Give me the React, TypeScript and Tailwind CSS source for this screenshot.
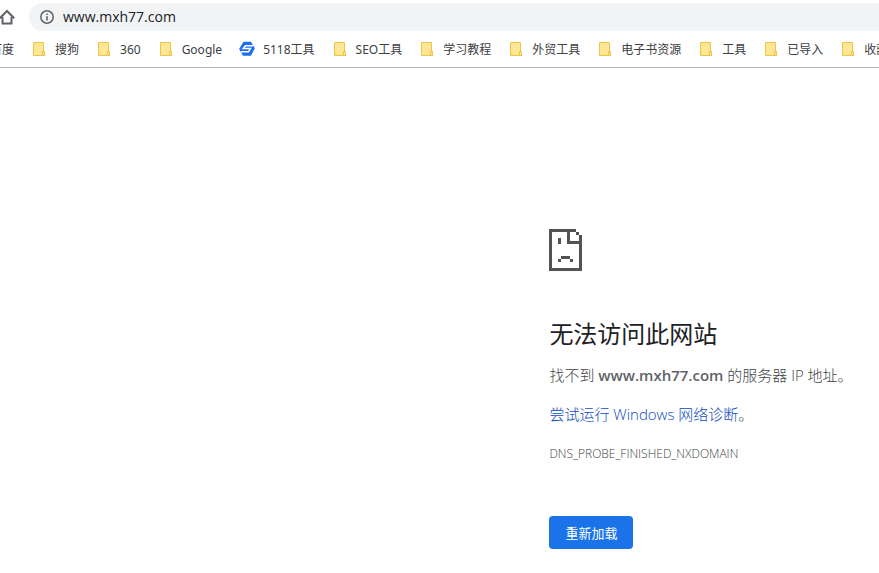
type Bookmark = { label: string; icon: "folder" | "site" | "none" };

const bookmarks: Bookmark[] = [
  { label: "百度", icon: "none" },
  { label: "搜狗", icon: "folder" },
  { label: "360", icon: "folder" },
  { label: "Google", icon: "folder" },
  { label: "5118工具", icon: "site" },
  { label: "SEO工具", icon: "folder" },
  { label: "学习教程", icon: "folder" },
  { label: "外贸工具", icon: "folder" },
  { label: "电子书资源", icon: "folder" },
  { label: "工具", icon: "folder" },
  { label: "已导入", icon: "folder" },
  { label: "收藏", icon: "folder" },
];

function HomeIcon() {
  return (
    <svg viewBox="0 0 16 16" className="size-4" fill="none" stroke="#5f6368" strokeWidth="2">
      <path d="M.8 9.200 8 2l7.200 7.200M3.500 8v6.500h9V8" />
    </svg>
  );
}

function InfoIcon() {
  return (
    <svg viewBox="0 0 14 14" className="size-3.5 shrink-0">
      <circle cx="7" cy="7" r="6.2" fill="none" stroke="#5f6368" strokeWidth="1.5" />
      <path d="M6.2 3.4h1.6V5H6.2zM6.2 6.2h1.6v4.4H6.2z" fill="#5f6368" />
    </svg>
  );
}

function FolderIcon() {
  return (
    <svg viewBox="0 0 16 16" className="size-4 shrink-0">
      <path d="M2.500 1.500h10v9h1v4h-11z" fill="#ffe694" stroke="#e9c54a" />
      <path d="M11.500 14.500v-4h2v4z" fill="#ffe694" stroke="#e9c54a" />
    </svg>
  );
}

function SiteIcon() {
  return (
    <svg viewBox="0 0 16 16" className="size-4 shrink-0">
      <path
        d="M5 1.500h6.500L15 7.500l-3.500 6.500H4.500L1 8z"
        fill="#1c6ef3"
        stroke="#1c6ef3"
        strokeWidth="1.500"
        strokeLinejoin="round"
      />
      <path d="M14 4.700H6.500L4.200 7.400h7.300L9.500 10.700H2" fill="none" stroke="#fff" strokeWidth="1.500" />
    </svg>
  );
}

function SadPageIcon() {
  return (
    <svg viewBox="0 0 11 14" className="h-[42px] w-[33px]" fill="#535353" shapeRendering="crispEdges">
      <path d="M0 0h9v1H1v12h9V5H6V1h1v3h3V2h1v12H0z" />
      <path d="M9 1h1v1H9zM3 3h1v2H3zM4 9h3v1H4zM3 10h1v1H3zM7 10h1v1H7z" />
    </svg>
  );
}

function Toolbar() {
  return (
    <div className="flex h-[34px] items-center py-[3px]">
      <button type="button" aria-label="主页" className="-ml-px">
        <HomeIcon />
      </button>
      <label className="ml-3.5 flex h-7 flex-1 items-center gap-[9px] rounded-l-full bg-[#f1f3f4] pl-[11px]">
        <InfoIcon />
        <input
          type="text"
          aria-label="地址"
          defaultValue="www.mxh77.com"
          className="min-w-0 flex-1 bg-transparent text-sm text-[#202124] outline-none"
        />
      </label>
    </div>
  );
}

function BookmarkBar() {
  return (
    <nav className="overflow-hidden border-b border-[#b6b6b6] font-['Noto_Sans','Noto_Sans_CJK_SC',sans-serif]">
      <ul className="-ml-[10px] flex h-[33px] items-center gap-[17px] pb-1">
        {bookmarks.map(({ label, icon }) => (
          <li key={label} className="shrink-0">
            <a href="#" className="flex items-center gap-2 text-xs whitespace-nowrap text-[#3c4043]">
              {icon === "folder" && <FolderIcon />}
              {icon === "site" && <SiteIcon />}
              <span className="pt-0.5">{label}</span>
            </a>
          </li>
        ))}
      </ul>
    </nav>
  );
}

export default function App() {
  return (
    <div className="min-h-screen overflow-hidden bg-white font-['Open_Sans','Noto_Sans_CJK_SC',sans-serif]">
      <Toolbar />
      <BookmarkBar />
      <main className="pt-[161px] pl-[62.5%] text-[15px] leading-6 font-light text-[#404347]">
        <SadPageIcon />
        <h1 className="mt-12 text-2xl leading-[30px] font-normal text-[#202124]">无法访问此网站</h1>
        <p className="mt-3.5 whitespace-nowrap">
          找不到 <strong className="font-semibold text-[#5f6368]">www.mxh77.com</strong> 的服务器 IP 地址。
        </p>
        <p className="mt-[15px] whitespace-nowrap">
          <a href="#" className="text-[#0b4ac4]">尝试运行 Windows 网络诊断</a>。
        </p>
        <p className="mt-4 text-xs leading-6">DNS_PROBE_FINISHED_NXDOMAIN</p>
        <button type="button" className="mt-[50px] h-[33px] rounded bg-[#1a73e8] px-4 text-[13px] font-normal text-white">
          重新加载
        </button>
      </main>
    </div>
  );
}
